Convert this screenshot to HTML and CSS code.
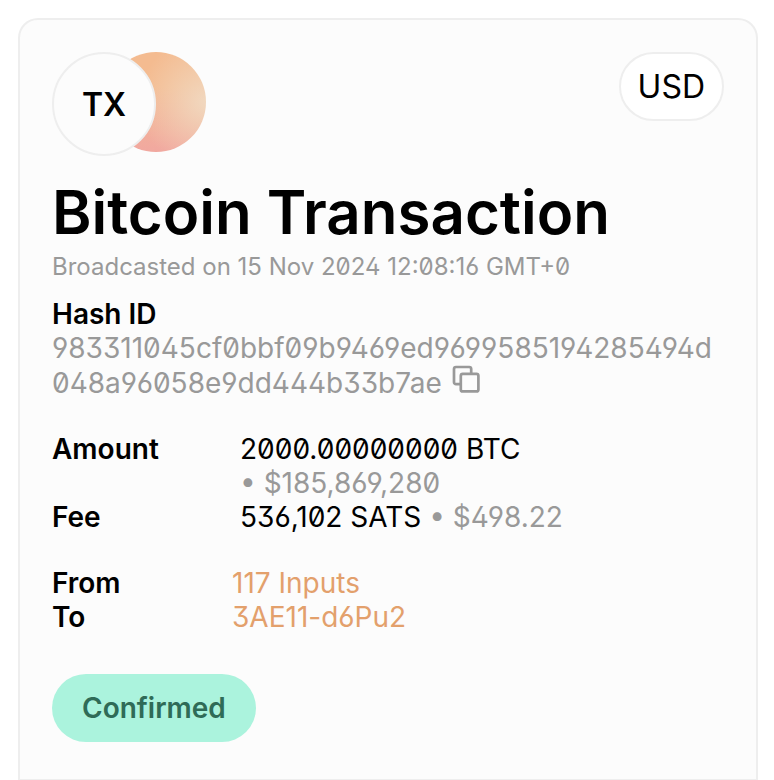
FILE: index.html
```html
<!DOCTYPE html>
<html lang="en">

<head>
    <meta charset="UTF-8">
    <meta name="viewport" content="width=device-width, initial-scale=1.0">
    <title>Bitcoin Transaction</title>
    <link rel="stylesheet" href="styles.css">
</head>

<body>
    <main class="card">
        <div class="card-top">
            <div class="badges">
                <div class="badge-tx">TX</div>
                <div class="badge-coin"></div>
            </div>
            <button type="button" class="currency">USD</button>
        </div>

        <h1>Bitcoin Transaction</h1>
        <p class="date">Broadcasted on 15 Nov 2024 12:08:16 GMT+0</p>

        <h2>Hash ID</h2>
        <p class="hash">
            983311045cf0bbf09b9469ed9699585194285494d<wbr>048a96058e9dd444b33b7ae
            <button type="button" class="copy" aria-label="Copy hash">
                <svg width="28" height="28" viewBox="0 0 28 28" fill="none" stroke="#999" stroke-width="2.7">
                    <path d="M8 19.2H4a2 2 0 0 1-2-2V4a2 2 0 0 1 2-2h13.2a2 2 0 0 1 2 2v4.8" />
                    <rect x="8.8" y="8.8" width="17.6" height="17.6" rx="2" />
                </svg>
            </button>
        </p>

        <dl class="details amounts">
            <dt>Amount</dt>
            <dd>2000.00000000 BTC <span class="fiat">&bull; $185,869,280</span></dd>
            <dt>Fee</dt>
            <dd>536,102 SATS <span class="fiat">&bull; $498.22</span></dd>
        </dl>

        <dl class="details">
            <dt>From</dt>
            <dd><a href="#inputs">117 Inputs</a></dd>
            <dt>To</dt>
            <dd><a href="#outputs">3AE11-d6Pu2</a></dd>
        </dl>

        <div class="status">Confirmed</div>
    </main>
</body>

</html>
```
FILE: styles.css
```css
* {
    box-sizing: border-box;
}

body {
    margin: 0;
    padding: 18px 16px 0 18px;
    background-color: #fff;
    color: #000;
    font-family: Inter, "Liberation Sans", sans-serif;
    font-size: 28px;
    line-height: 34px;
}

.card {
    padding: 32px 32px 37px;
    background-color: #fcfcfc;
    border: 2px solid #eee;
    border-bottom-width: 1px;
    border-radius: 20px 20px 0 0;
}

.card-top {
    display: flex;
    justify-content: space-between;
    align-items: flex-start;
}

.badges {
    display: flex;
}

.badge-tx {
    display: flex;
    justify-content: center;
    align-items: center;
    width: 104px;
    height: 104px;
    padding-top: 2px;
    border: 2px solid #eee;
    border-radius: 50%;
    background-color: #fcfcfc;
    font-size: 32px;
    font-weight: 600;
    z-index: 1;
}

.badge-coin {
    width: 100px;
    height: 100px;
    margin-left: -50px;
    border-radius: 50%;
    background: radial-gradient(circle at 100% 50%, #f1d8bf, transparent 60%), linear-gradient(#f4bb90 35%, #f1a8a0);
}

.currency {
    padding: 14px 17px;
    border: 2px solid #eee;
    border-radius: 35px;
    background-color: #fff;
    color: #000;
    font-family: inherit;
    font-size: 32px;
    line-height: 37px;
}

h1 {
    margin: 19px 0 0;
    font-size: 60px;
    font-weight: 600;
    line-height: 74px;
}

.date,
.hash,
.details dd {
    margin: 0;
    font-feature-settings: "zero", "ss01", "cv09";
}

.date {
    color: #999;
    font-size: 24px;
    line-height: 36px;
}

h2 {
    margin: 12px 0 0;
    font-size: 28px;
    font-weight: 600;
}

.hash {
    color: #999;
}

.copy {
    margin-left: 2px;
    padding: 0;
    border: none;
    background: none;
    line-height: 0;
}

.details {
    display: grid;
    grid-template-columns: 180px 1fr;
    margin: 32px 0 0;
}

.amounts {
    grid-template-columns: 188px 1fr;
}

.details dt {
    font-weight: 600;
}

.fiat {
    color: #999;
    white-space: nowrap;
}

.details a {
    color: #e3a06c;
    text-decoration: none;
}

.status {
    width: fit-content;
    margin-top: 40px;
    padding: 17px 30px;
    border-radius: 34px;
    background-color: #abf3dd;
    color: #2f6b57;
    font-weight: 600;
}
```
